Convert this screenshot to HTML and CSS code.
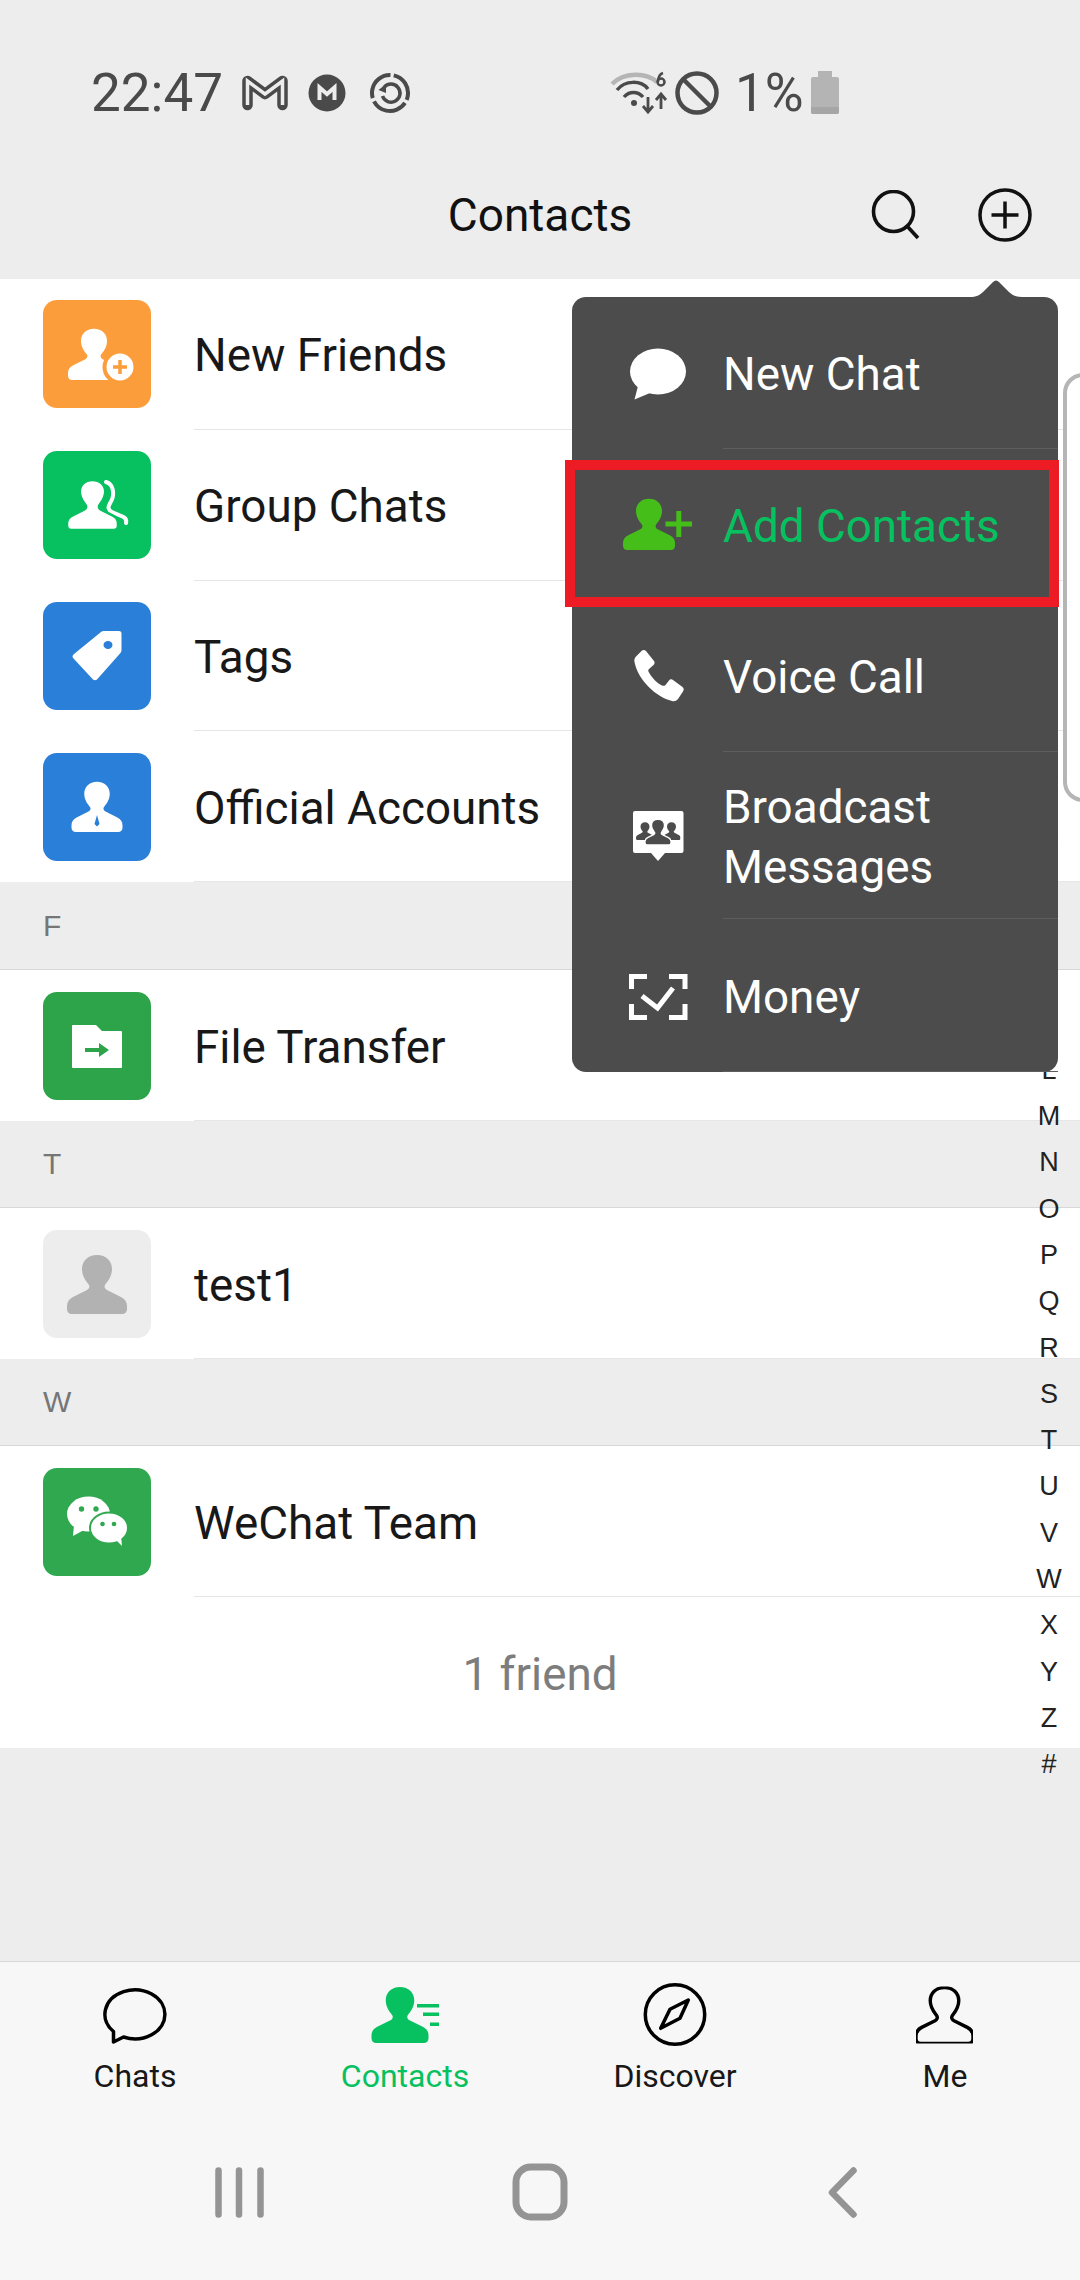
FILE: index.html
```html
<!DOCTYPE html>
<html lang="en">
<head>
<meta charset="utf-8">
<title>Contacts</title>
<link rel="stylesheet" href="styles.css">
</head>
<body>
<svg class="defs" width="0" height="0" aria-hidden="true">
  <symbol id="person" viewBox="0 0 60 60">
    <path d="M30 1C39 1 45 7 45 15C45 23 40 28 38 31C37 33 38 35 40 36L54 43C58 45 60 48 60 52V55C60 58 58 60 55 60H5C2 60 0 58 0 55V52C0 48 2 45 6 43L20 36C22 35 23 33 22 31C20 28 15 23 15 15C15 7 21 1 30 1Z"/>
  </symbol>
</svg>
<div class="app">
  <div class="status">
    <div class="status-group">
      <span class="time">22:47</span>
      <svg class="st-m" width="46" height="36" viewBox="0 0 46 36"><path d="M5.500 30V6L23 19L40.500 6V30" fill="none" stroke="#4a4a4a" stroke-width="10.500" stroke-linejoin="round" stroke-linecap="round"/><path d="M5.500 30V6L23 19L40.500 6V30" fill="none" stroke="#ededed" stroke-width="3.500" stroke-linejoin="miter"/></svg>
      <svg class="st-circle" width="38" height="38" viewBox="0 0 38 38"><circle cx="19" cy="19" r="18.500" fill="#4a4a4a"/><path d="M11.500 26V13.500L19 20L26.500 13.500V26" fill="none" stroke="#ededed" stroke-width="4"/></svg>
      <svg class="st-sync" width="42" height="42" viewBox="0 0 42 42"><circle cx="21" cy="21" r="18" fill="none" stroke="#4a4a4a" stroke-width="4" pathLength="100" stroke-dasharray="28 3 33 3 30 3" transform="rotate(-78 21 21)"/><path d="M15 15.500A9 9 0 1 1 13.500 24" fill="none" stroke="#4a4a4a" stroke-width="3.500"/><path d="M9.500 18L17 12V21Z" fill="#4a4a4a"/></svg>
    </div>
    <div class="status-group">
      <svg class="st-wifi" width="60" height="44" viewBox="0 0 60 44"><path d="M2 13C14 1 36 1 47 11" fill="none" stroke="#b5b5b5" stroke-width="4.500"/><path d="M7 19C15 9 31 9 38 18" fill="none" stroke="#4a4a4a" stroke-width="3.500"/><path d="M14 26C19 20 28 20 33 26" fill="none" stroke="#4a4a4a" stroke-width="3.500"/><circle cx="24" cy="32" r="3" fill="#4a4a4a"/><path d="M38 26V40M33 35L38 41L43 35" fill="none" stroke="#4a4a4a" stroke-width="2.800"/><path d="M51 38V24M46 29L51 23L56 29" fill="none" stroke="#4a4a4a" stroke-width="2.800"/><circle cx="51" cy="11" r="3.500" fill="none" stroke="#4a4a4a" stroke-width="2.500"/><path d="M48 11C48 6 50 3 53 2" fill="none" stroke="#4a4a4a" stroke-width="2.500"/></svg>
      <svg class="st-block" width="44" height="44" viewBox="0 0 44 44"><circle cx="22" cy="22" r="19.500" fill="none" stroke="#4a4a4a" stroke-width="4.500"/><path d="M8.500 8.500L35.500 35.500" stroke="#4a4a4a" stroke-width="4.500"/></svg>
      <span class="percent">1%</span>
      <svg class="st-batt" width="28" height="43" viewBox="0 0 28 43"><path d="M7 0H21V6H26Q28 6 28 8V41Q28 43 26 43H2Q0 43 0 41V8Q0 6 2 6H7Z" fill="#b4b4b4"/><path d="M0 36H28V41Q28 43 26 43H2Q0 43 0 41Z" fill="#a6a6a6"/></svg>
    </div>
  </div>

  <header class="topbar">
    <h1 class="title">Contacts</h1>
    <div class="top-actions">
      <svg width="52" height="50" viewBox="0 0 52 50"><circle cx="23.500" cy="21.500" r="20" fill="none" stroke="#111" stroke-width="3.600"/><path d="M37 36L48 48" stroke="#111" stroke-width="3.600"/></svg>
      <svg width="54" height="54" viewBox="0 0 54 54"><circle cx="27" cy="27" r="25" fill="none" stroke="#111" stroke-width="3.500"/><path d="M13.500 27H40.500M27 13.500V40.500" stroke="#111" stroke-width="3.500"/></svg>
    </div>
  </header>

  <main class="list">
    <div class="row row-top">
      <svg class="avatar orange" viewBox="0 0 108 108"><use href="#person" x="25" y="28" width="52" height="52" fill="#fff"/><circle cx="77" cy="67" r="15.500" fill="#fff" stroke="#fc9d3c" stroke-width="4"/><path d="M70 67H84M77 60V74" stroke="#fc9d3c" stroke-width="3.500"/></svg>
      <div class="name">New Friends</div>
    </div>
    <div class="row row-top">
      <svg class="avatar green" viewBox="0 0 108 108"><path d="M63 31C70 33 71 41 69.500 47C68 52 65 54 65.500 57C66 59 67 60 69 61L80.500 66C83 67.500 83.500 70 83 72" fill="none" stroke="#fff" stroke-width="4" stroke-linecap="round"/><use href="#person" x="24" y="28" width="51" height="51" fill="#fff" stroke="#07c160" stroke-width="3"/></svg>
      <div class="name">Group Chats</div>
    </div>
    <div class="row row-top">
      <svg class="avatar blue" viewBox="0 0 108 108"><path d="M31 52L58 30Q59 29 61 29H76Q78.500 29 78.500 31.500V48Q78.500 50 77 51.500L54 77.500Q52 79 50 77.500L31 57Q28 54.500 31 52Z" fill="#fff"/><ellipse cx="65" cy="43" rx="4.500" ry="4" fill="#2a7fd8"/></svg>
      <div class="name">Tags</div>
    </div>
    <div class="row row-top">
      <svg class="avatar blue" viewBox="0 0 108 108"><use href="#person" x="28" y="28" width="52" height="51" fill="#fff"/><path d="M54 62L56.500 71L54 73.500L51.500 71Z" fill="#2a7fd8"/></svg>
      <div class="name">Official Accounts</div>
    </div>

    <div class="section section-first">F</div>
    <div class="row">
      <svg class="avatar dark-green" viewBox="0 0 108 108"><path d="M29 34Q29 33 30 33H53L59 39H78Q79 39 79 40V75Q79 76 78 76H30Q29 76 29 75Z" fill="#fff"/><path d="M42 56H56V51L66 58L56 65V60H42Z" fill="#2da44a"/></svg>
      <div class="name">File Transfer</div>
    </div>

    <div class="section">T</div>
    <div class="row">
      <svg class="avatar grey" viewBox="0 0 108 108"><use href="#person" x="24" y="24" width="60" height="60" fill="#b2b2b2"/></svg>
      <div class="name">test1</div>
    </div>

    <div class="section">W</div>
    <div class="row">
      <svg class="avatar wechat" viewBox="0 0 108 108"><ellipse cx="45.500" cy="46" rx="21.500" ry="17.500" fill="#fff"/><path d="M31 57L30 68L41 62Z" fill="#fff"/><ellipse cx="66" cy="60" rx="19" ry="15.500" fill="#fff" stroke="#2fa84f" stroke-width="2"/><path d="M72 71L79 78L78 68Z" fill="#fff"/><circle cx="38.500" cy="41" r="2.700" fill="#2fa84f"/><circle cx="53" cy="41" r="2.700" fill="#2fa84f"/><circle cx="59.500" cy="56" r="2.300" fill="#2fa84f"/><circle cx="71" cy="56" r="2.300" fill="#2fa84f"/></svg>
      <div class="name">WeChat Team</div>
    </div>
    <div class="footer-count">1 friend</div>
  </main>

  <div class="spacer"></div>

  <nav class="tabs">
    <div class="tab">
      <svg class="shift-left" width="70" height="66" viewBox="0 0 70 66"><path d="M24.500 55L14.500 60V49.500A30 24.500 0 1 1 24.500 55Z" fill="none" stroke="#000" stroke-width="3.500" stroke-linejoin="round"/></svg>
      <span class="tab-label">Chats</span>
    </div>
    <div class="tab active">
      <svg width="70" height="66" viewBox="0 0 70 66"><use href="#person" x="0" y="4" width="60" height="57" preserveAspectRatio="none" fill="#07c160"/><path d="M47 22H69V25.500H47ZM53 30.500H69V34H53ZM60 40.500H69V44H60Z" fill="#07c160"/></svg>
      <span class="tab-label">Contacts</span>
    </div>
    <div class="tab">
      <svg width="70" height="66" viewBox="0 0 70 66"><circle cx="35" cy="32.500" r="29.700" fill="none" stroke="#000" stroke-width="3.500"/><path d="M48.300 18L40 36.300L20.700 46.300L30 27.300Z" fill="none" stroke="#000" stroke-width="3.500" stroke-linejoin="round"/></svg>
      <span class="tab-label">Discover</span>
    </div>
    <div class="tab">
      <svg class="shift-left" width="70" height="66" viewBox="0 0 70 66"><use href="#person" x="7" y="4.500" width="57" height="57" fill="none" stroke="#000" stroke-width="3.600"/></svg>
      <span class="tab-label">Me</span>
    </div>
  </nav>

  <div class="navbar">
    <div class="nav-slot"><svg width="54" height="60" viewBox="0 0 54 60"><path d="M8.500 8.500V52.500M29 8.500V52.500M50.500 8.500V52.500" stroke="#949494" stroke-width="6.500" stroke-linecap="round"/></svg></div>
    <div class="nav-slot"><svg width="60" height="60" viewBox="0 0 60 60"><rect x="6" y="5" width="48" height="50" rx="15" fill="none" stroke="#949494" stroke-width="7"/></svg></div>
    <div class="nav-slot"><svg width="34" height="60" viewBox="0 0 34 60"><path d="M27.500 8.500L6 30.500L27.500 52.500" fill="none" stroke="#949494" stroke-width="6.500" stroke-linecap="round" stroke-linejoin="round"/></svg></div>
  </div>

  <div class="edge-handle"></div>

  <div class="index">
    <span>A</span><span>B</span><span>C</span><span>D</span><span>E</span><span>F</span><span>G</span><span>H</span><span>I</span><span>J</span><span>K</span><span>L</span><span>M</span><span>N</span><span>O</span><span>P</span><span>Q</span><span>R</span><span>S</span><span>T</span><span>U</span><span>V</span><span>W</span><span>X</span><span>Y</span><span>Z</span><span>#</span>
  </div>

  <div class="menu">
    <svg class="menu-arrow" width="52" height="19" viewBox="0 0 52 19"><path d="M0 18C6 18 10 16 13 13L23 3Q26 0 29 3L39 13C42 16 46 18 52 18V19H0Z" fill="#4c4c4c"/></svg>
    <div class="menu-item m1">
      <svg class="menu-icon" width="80" height="80" viewBox="0 0 80 80"><ellipse cx="40" cy="38.500" rx="28" ry="23" fill="#fff"/><path d="M20 53L16.500 66.500L32 60Z" fill="#fff"/></svg>
      <div class="menu-text">New Chat</div>
    </div>
    <div class="menu-item m2 selected">
      <svg class="menu-icon" width="80" height="80" viewBox="0 0 80 80"><use href="#person" x="5" y="13" width="52" height="52" fill="#45be1a"/><path d="M47.500 39H74M60.800 26V52" stroke="#45be1a" stroke-width="5"/></svg>
      <div class="menu-text">Add Contacts</div>
    </div>
    <div class="menu-item m3">
      <svg class="menu-icon" width="80" height="80" viewBox="0 0 80 80"><path d="M24 14.500C25.500 13.500 27 14 28 15L36 25C37 26.500 36.500 28 35.500 29L31 33C30 34 30 35 31 36.500C34 42 39 47 44 49.500C45.500 50 46.500 50 47.500 49L51 44.500C52 43 54 43 55 44L64.500 51C66 52 66 54 65 55.500L60 63C58.500 65 56 65.500 54 65C38 61 20 44 16.500 26C16 24 16.500 22 18 20.500Z" fill="#fff"/></svg>
      <div class="menu-text">Voice Call</div>
    </div>
    <div class="menu-item m4">
      <svg class="menu-icon" width="80" height="80" viewBox="0 0 80 80"><path d="M17 15H63.500Q65.500 15 65.500 17V55Q65.500 57 63.500 57H47L40 65L33 57H17Q15 57 15 55V17Q15 15 17 15Z" fill="#fff"/><use href="#person" x="18" y="26" width="18" height="18" fill="#4c4c4c"/><use href="#person" x="44.500" y="26" width="18" height="18" fill="#4c4c4c"/><use href="#person" x="27" y="23" width="26" height="26" fill="#4c4c4c" stroke="#fff" stroke-width="3"/></svg>
      <div class="menu-text">Broadcast<br>Messages</div>
    </div>
    <div class="menu-item m5">
      <svg class="menu-icon" width="80" height="80" viewBox="0 0 80 80"><path d="M29 20.500H13.500V33M51 20.500H67V33M13.500 48V61.500H29M67 48V61.500H51" fill="none" stroke="#fff" stroke-width="5"/><path d="M24 40L39.500 52L55 32" fill="none" stroke="#fff" stroke-width="5"/></svg>
      <div class="menu-text">Money</div>
    </div>
  </div>

  <div class="highlight"></div>
</div>
</body>
</html>
```

FILE: styles.css
```css
* { box-sizing: border-box; }
html, body { margin: 0; padding: 0; }
body { width: 1080px; height: 2280px; font-family: Roboto, "Liberation Sans", sans-serif; background: #ededed; }
svg { display: block; flex: none; }
.defs { position: absolute; }

.app { position: relative; width: 1080px; height: 2280px; overflow: hidden; display: flex; flex-direction: column; background: #ededed; }

.status { height: 126px; padding: 59px 241px 0 91px; display: flex; justify-content: space-between; align-items: center; color: #4a4a4a; }
.status-group { display: flex; align-items: center; }
.time { font-size: 53px; font-weight: 400; line-height: 60px; width: 130px; }
.st-m { margin-left: 21px; }
.st-circle { margin-left: 20px; }
.st-sync { margin-left: 23px; }
.st-block { margin-left: 5px; }
.percent { font-size: 53px; font-weight: 400; line-height: 60px; margin-left: 16px; width: 74px; }
.st-batt { margin-left: 2px; }

.topbar { height: 153px; padding: 24px 48px 0; display: grid; grid-template-columns: 1fr auto 1fr; align-items: center; }
.title { grid-column: 2; margin: 0; font-size: 46px; font-weight: 400; color: #111; line-height: 60px; }
.top-actions { grid-column: 3; display: flex; justify-content: flex-end; align-items: center; gap: 56px; }

.list { background: #fff; flex: none; }
.row { height: 151px; padding-left: 43px; display: flex; align-items: center; }
.row-top { height: 150.750px; }
.avatar { width: 108px; height: 108px; border-radius: 14px; }
.orange { background: #fc9d3c; }
.green { background: #07c160; }
.blue { background: #2a7fd8; }
.dark-green { background: #2da44a; }
.wechat { background: #2fa84f; }
.grey { background: #ededed; }
.name { flex: 1; height: 100%; margin-left: 43px; padding-top: 4px; display: flex; align-items: center; font-size: 45.800px; color: #181818; border-bottom: 1.500px solid #e6e6e6; }
.section { height: 87px; padding-left: 43px; display: flex; align-items: center; background: #ededed; border-bottom: 1.500px solid #d8d8d8; font-family: "Liberation Sans", Arial, sans-serif; font-size: 30px; color: #767676; }
.section-first { height: 88px; }
.footer-count { height: 151px; padding-top: 3px; display: flex; align-items: center; justify-content: center; font-size: 45.800px; color: #7d7d7d; }

.spacer { flex: 1; }

.tabs { height: 169px; padding-top: 20px; display: grid; grid-template-columns: repeat(4, 270px); background: #f7f7f7; border-top: 1.500px solid #d8d8d8; }
.tab { display: flex; flex-direction: column; align-items: center; gap: 10px; }
.shift-left { transform: translateX(-1px); }
.tab-label { font-size: 32px; line-height: 36px; color: #181818; }
.tab.active .tab-label { color: #07c160; }

.navbar { height: 150px; padding: 32px 85px 0; display: flex; background: #f7f7f7; }
.nav-slot { width: 303px; height: 60px; display: flex; justify-content: center; }

.edge-handle { position: absolute; left: 1063px; top: 373px; width: 40px; height: 429px; background: #fff; border: 4px solid #b5b5b5; border-radius: 22px; }

.index { position: absolute; left: 1029px; top: 537.500px; width: 40px; display: flex; flex-direction: column; font-family: "Liberation Sans", Arial, sans-serif; font-size: 27px; color: #222; text-align: center; }
.index span { height: 46.300px; line-height: 46.300px; }

.menu { position: absolute; left: 572px; top: 297px; width: 486px; height: 775px; background: #4c4c4c; border-radius: 14px; display: flex; flex-direction: column; padding-left: 46px; }
.menu-arrow { position: absolute; left: 398px; top: -18px; }
.menu-item { display: flex; align-items: center; }
.m1 { height: 152px; }
.m2 { height: 151px; }
.m3 { height: 152px; }
.m4 { height: 167px; }
.m5 { height: 153px; }
.menu-icon { margin-right: 25px; }
.menu-text { flex: 1; height: 100%; padding-top: 5px; display: flex; align-items: center; font-size: 45.800px; line-height: 60px; color: #fff; border-bottom: 1.500px solid #5e5e5e; }
.m4 .menu-text { padding-top: 6px; }
.selected .menu-text { color: #07c160; }

.highlight { position: absolute; left: 565px; top: 460px; width: 494px; height: 147px; border: 10px solid #ed1c24; }
```
